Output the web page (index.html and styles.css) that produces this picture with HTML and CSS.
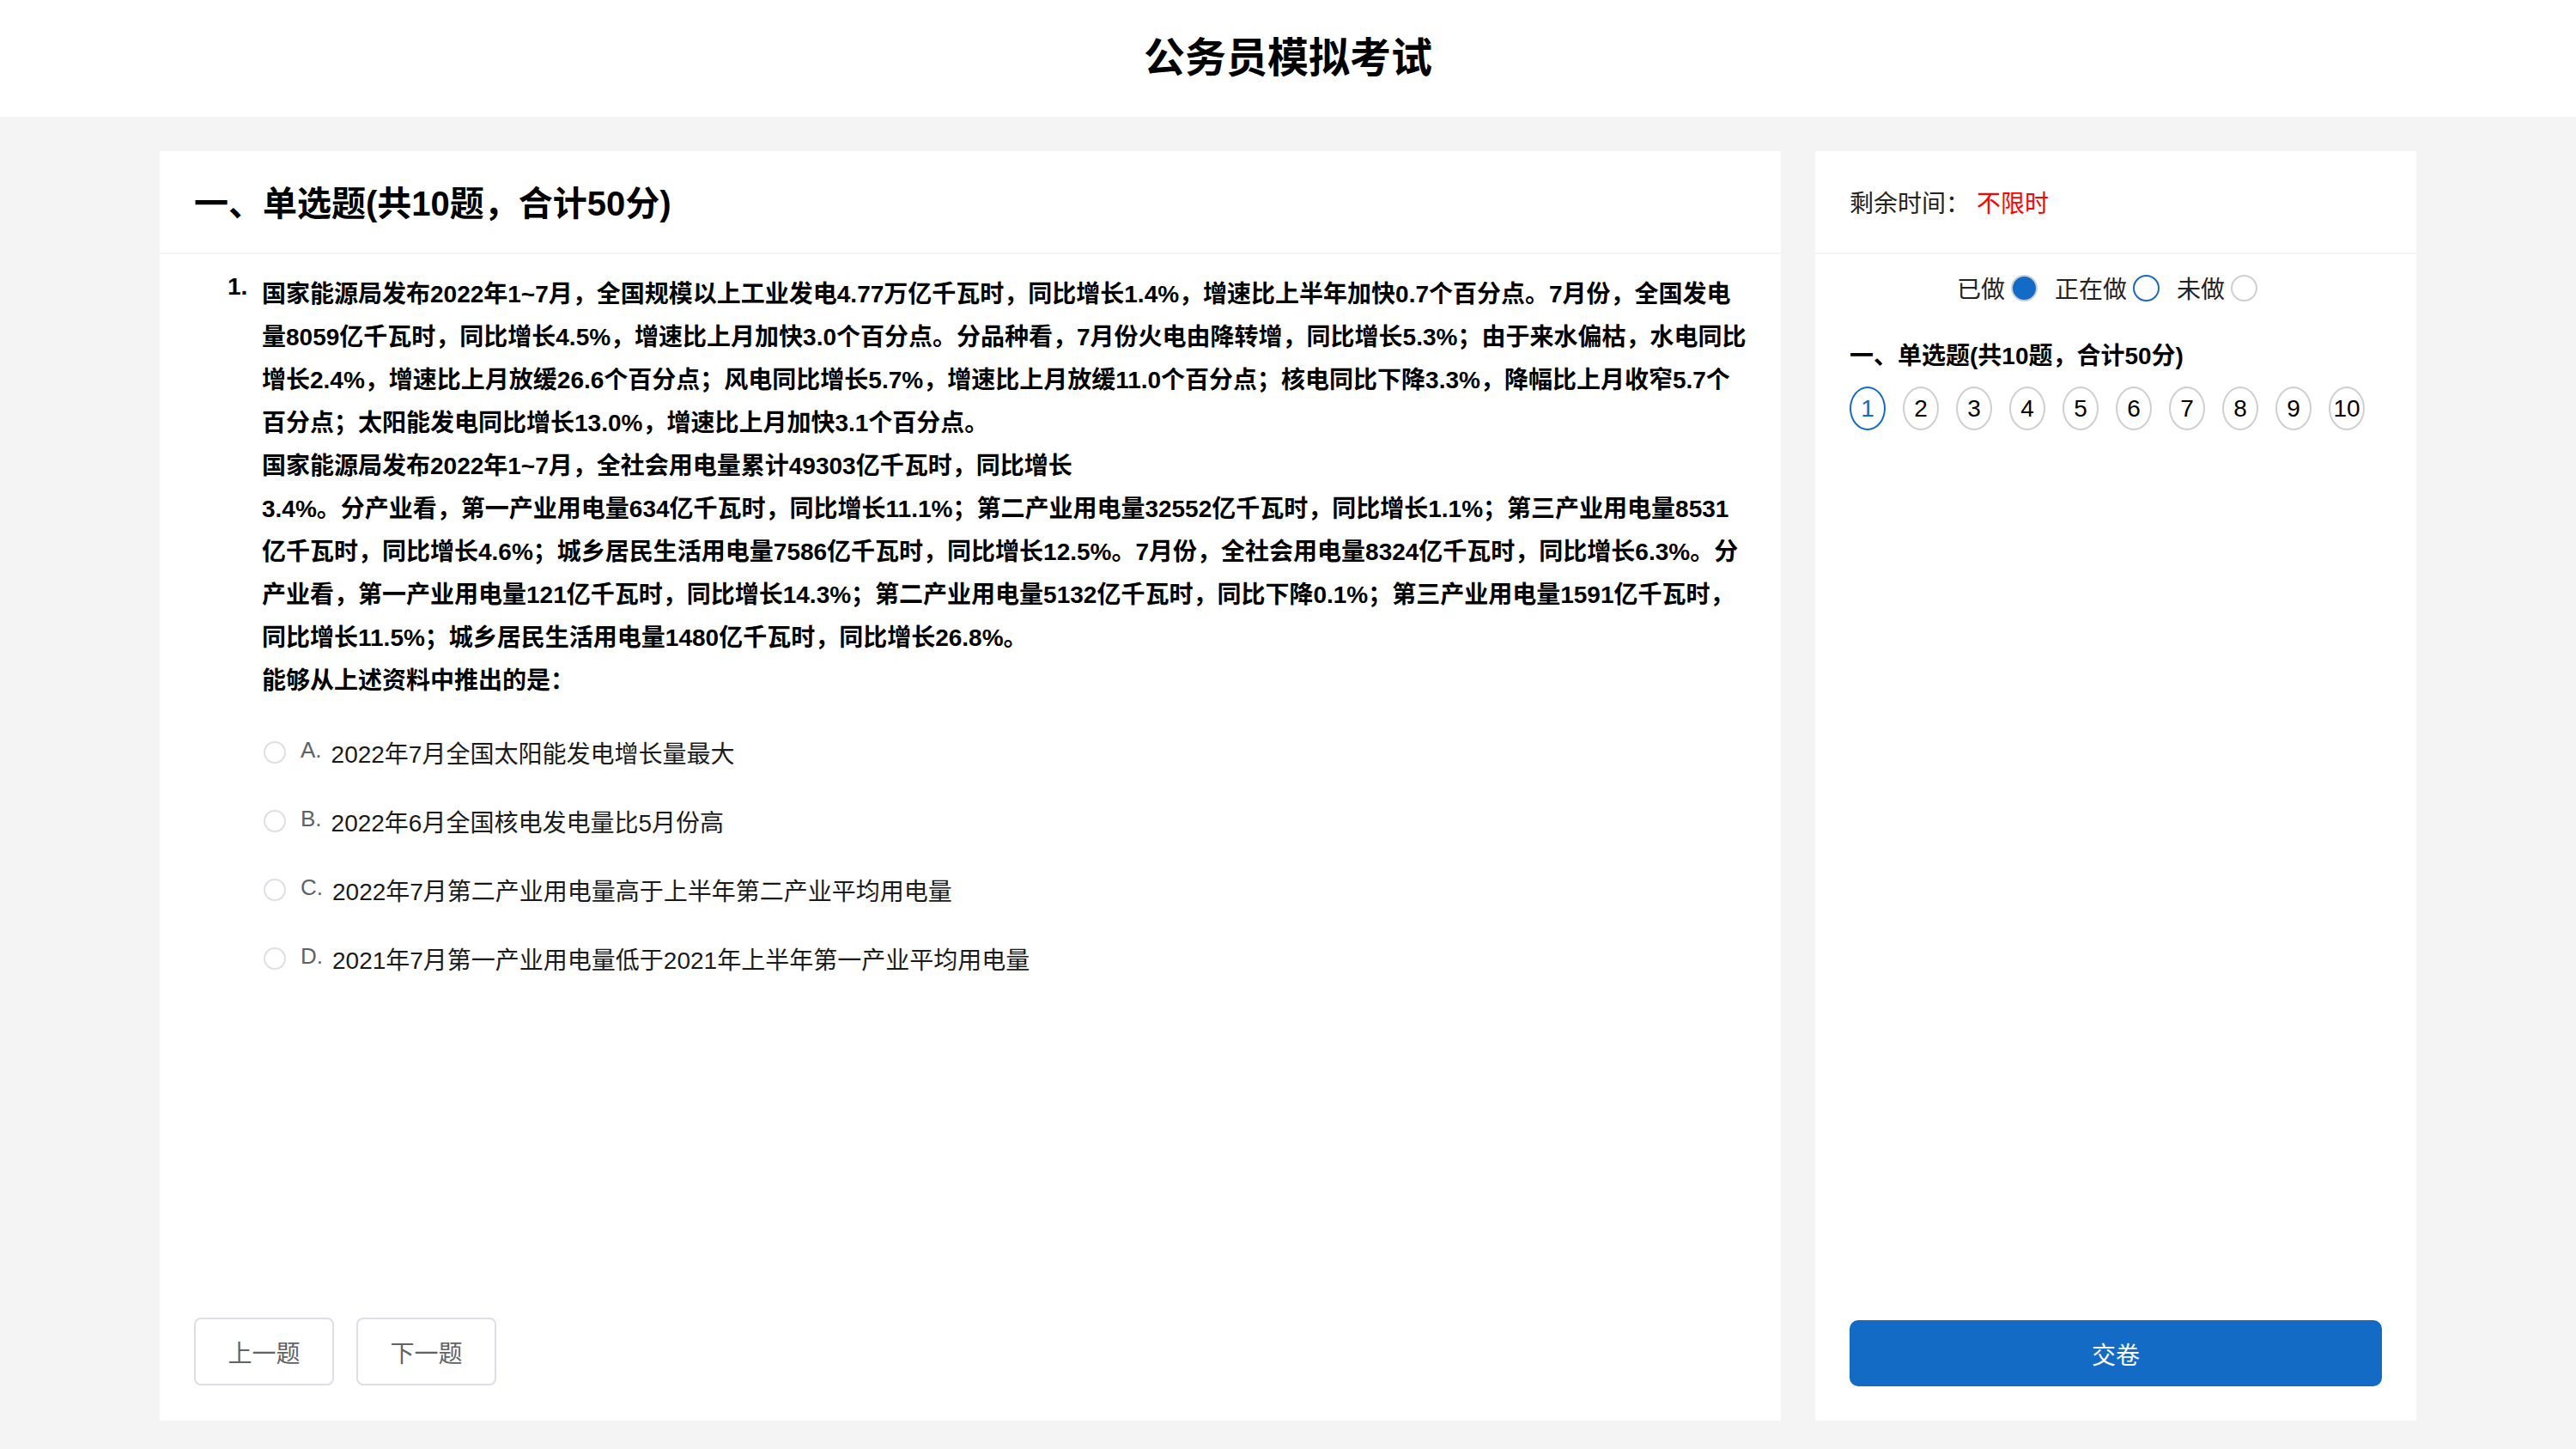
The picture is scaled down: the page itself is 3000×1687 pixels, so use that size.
FILE: index.html
```html
<!DOCTYPE html>
<html lang="zh-CN">
<head>
<meta charset="utf-8">
<title>公务员模拟考试</title>
<link rel="stylesheet" href="styles.css">
</head>
<body>
<header class="topbar">
  <h1 class="page-title">公务员模拟考试</h1>
</header>
<main class="exam">
  <section class="paper">
    <div class="paper-head">
      <h2 class="section-title">一、单选题(共10题，合计50分)</h2>
    </div>
    <div class="paper-body">
      <div class="question">
        <span class="q-no">1.</span>
        <div class="q-text">
          <p>国家能源局发布2022年1~7月，全国规模以上工业发电4.77万亿千瓦时，同比增长1.4%，增速比上半年加快0.7个百分点。7月份，全国发电量8059亿千瓦时，同比增长4.5%，增速比上月加快3.0个百分点。分品种看，7月份火电由降转增，同比增长5.3%；由于来水偏枯，水电同比增长2.4%，增速比上月放缓26.6个百分点；风电同比增长5.7%，增速比上月放缓11.0个百分点；核电同比下降3.3%，降幅比上月收窄5.7个百分点；太阳能发电同比增长13.0%，增速比上月加快3.1个百分点。</p>
          <p>国家能源局发布2022年1~7月，全社会用电量累计49303亿千瓦时，同比增长<br>3.4%。分产业看，第一产业用电量634亿千瓦时，同比增长11.1%；第二产业用电量32552亿千瓦时，同比增长1.1%；第三产业用电量8531亿千瓦时，同比增长4.6%；城乡居民生活用电量7586亿千瓦时，同比增长12.5%。7月份，全社会用电量8324亿千瓦时，同比增长6.3%。分产业看，第一产业用电量121亿千瓦时，同比增长14.3%；第二产业用电量5132亿千瓦时，同比下降0.1%；第三产业用电量1591亿千瓦时，同比增长11.5%；城乡居民生活用电量1480亿千瓦时，同比增长26.8%。</p>
          <p>能够从上述资料中推出的是：</p>
        </div>
      </div>
      <ul class="options">
        <li class="option"><span class="radio"></span><span class="opt-key">A.</span><span class="opt-text">2022年7月全国太阳能发电增长量最大</span></li>
        <li class="option"><span class="radio"></span><span class="opt-key">B.</span><span class="opt-text">2022年6月全国核电发电量比5月份高</span></li>
        <li class="option"><span class="radio"></span><span class="opt-key">C.</span><span class="opt-text">2022年7月第二产业用电量高于上半年第二产业平均用电量</span></li>
        <li class="option"><span class="radio"></span><span class="opt-key">D.</span><span class="opt-text">2021年7月第一产业用电量低于2021年上半年第一产业平均用电量</span></li>
      </ul>
      <div class="pager">
        <button class="btn" type="button">上一题</button>
        <button class="btn" type="button">下一题</button>
      </div>
    </div>
  </section>
  <aside class="sheet">
    <div class="sheet-head">剩余时间：<span class="time">不限时</span></div>
    <div class="sheet-body">
      <div class="legend">
        <span class="legend-item">已做<i class="dot dot-done"></i></span>
        <span class="legend-item">正在做<i class="dot dot-current"></i></span>
        <span class="legend-item">未做<i class="dot"></i></span>
      </div>
      <h3 class="sheet-title">一、单选题(共10题，合计50分)</h3>
      <div class="nums">
        <span class="num num-current">1</span>
        <span class="num">2</span>
        <span class="num">3</span>
        <span class="num">4</span>
        <span class="num">5</span>
        <span class="num">6</span>
        <span class="num">7</span>
        <span class="num">8</span>
        <span class="num">9</span>
        <span class="num">10</span>
      </div>
      <button class="submit" type="button">交卷</button>
    </div>
  </aside>
</main>
</body>
</html>
```

FILE: styles.css
```css
* {
  box-sizing: border-box;
}

body {
  margin: 0;
  background: #f4f4f4;
  color: #000;
  font-family: "Liberation Sans", "Noto Sans CJK SC", sans-serif;
}

.topbar {
  height: 136px;
  background: #fff;
  display: flex;
  align-items: center;
  justify-content: center;
  padding-bottom: 10px;
}

.page-title {
  margin: 0;
  font-size: 48px;
  font-weight: bold;
}

.exam {
  display: flex;
  gap: 40px;
  width: 2628px;
  height: 1478px;
  margin: 40px auto 0;
}

/* left paper */
.paper {
  width: 1888px;
  display: flex;
  flex-direction: column;
  gap: 2px;
}

.paper-head {
  height: 118px;
  flex: none;
  background: #fff;
  display: flex;
  align-items: center;
  padding: 0 40px 2px;
}

.section-title {
  margin: 0;
  font-size: 40px;
  font-weight: bold;
}

.paper-body {
  flex: 1;
  background: #fff;
  padding: 22px 37px 41px 79px;
  display: flex;
  flex-direction: column;
}

.question {
  display: flex;
  align-items: flex-start;
  font-size: 28px;
  font-weight: bold;
}

.q-no {
  width: 40px;
  flex: none;
  line-height: normal;
}

.q-text {
  flex: 1;
  line-height: 50px;
}

.q-text p {
  margin: 0;
}

.options {
  list-style: none;
  margin: 18px 0 0;
  padding: 0 0 0 42px;
}

.option {
  height: 80px;
  display: flex;
  align-items: center;
  font-size: 28px;
  color: #1a1a1a;
}

.radio {
  width: 26px;
  height: 26px;
  border: 2px solid #dcdfe6;
  border-radius: 50%;
  flex: none;
}

.opt-key {
  margin-left: 17px;
  margin-right: 11px;
  font-size: 26px;
  color: #606266;
  position: relative;
  top: -3px;
}

.pager {
  margin-top: auto;
  display: flex;
  gap: 26px;
  margin-left: -39px;
}

.btn {
  width: 163px;
  height: 79px;
  background: #fff;
  border: 2px solid #dcdfe6;
  border-radius: 8px;
  font-family: inherit;
  font-size: 28px;
  color: #606266;
  padding: 0;
}

/* right sheet */
.sheet {
  width: 700px;
  display: flex;
  flex-direction: column;
  gap: 2px;
}

.sheet-head {
  height: 118px;
  flex: none;
  background: #fff;
  display: flex;
  align-items: center;
  padding: 0 40px;
  font-size: 28px;
  color: #222;
}

.time {
  color: #ff0000;
  margin-left: 8px;
}

.sheet-body {
  flex: 1;
  background: #fff;
  padding: 19px 40px 40px;
  display: flex;
  flex-direction: column;
}

.legend {
  height: 40px;
  display: flex;
  justify-content: center;
  align-items: center;
  font-size: 28px;
  color: #222;
}

.legend-item {
  display: flex;
  align-items: center;
  margin-right: 20px;
}

.dot {
  width: 31px;
  height: 31px;
  margin-left: 7px;
  border-radius: 50%;
  border: 2px solid #cfcfcf;
  background: #fff;
}

.dot-done {
  background: #146bc6;
  border-color: #cfcfcf;
}

.dot-current {
  border-color: #146bc6;
}

.sheet-title {
  margin: 40px 0 0;
  font-size: 28px;
  line-height: 40px;
  font-weight: bold;
}

.nums {
  display: flex;
  gap: 20px;
  margin-top: 15px;
}

.num {
  width: 42px;
  height: 51px;
  border: 2px solid #cfcfcf;
  border-radius: 50%;
  display: flex;
  align-items: center;
  justify-content: center;
  font-size: 28px;
  color: #000;
}

.num-current {
  border-color: #146bc6;
  color: #146bc6;
}

.submit {
  margin-top: auto;
  width: 620px;
  height: 77px;
  border: none;
  border-radius: 10px;
  background: #146bc6;
  color: #fff;
  font-family: inherit;
  font-size: 28px;
}
```
